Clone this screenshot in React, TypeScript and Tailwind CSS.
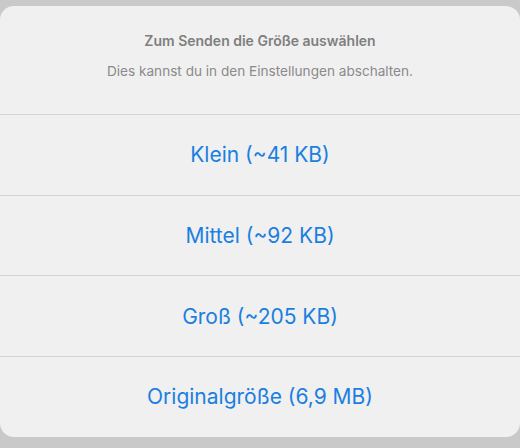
const OPTIONS = ['Klein (~41 KB)', 'Mittel (~92 KB)', 'Groß (~205 KB)', 'Originalgröße (6,9 MB)']

export default function App() {
  return (
    <div
      className="w-[520px] h-[448px] bg-[#c9c9c9] pt-[6px]"
      style={{ fontFamily: 'Inter, "Noto Sans", sans-serif' }}
    >
      <div className="w-full h-[431px] bg-[#f0f0f0] rounded-[14px] flex flex-col overflow-hidden">
        <div className="h-[108px] flex flex-col items-center pt-[27px]">
          <p className="text-[14px] leading-4 font-semibold text-[#7f7f7f]">Zum Senden die Größe auswählen</p>
          <p className="mt-[14px] text-[13.6px] leading-4 text-[#8a8a8a]">
            Dies kannst du in den Einstellungen abschalten.
          </p>
        </div>
        {OPTIONS.map((label) => (
          <div
            key={label}
            className="h-[81px] border-t border-[#d4d4d4] flex items-center justify-center text-[21px] text-[#1a7fe0]"
          >
            {label}
          </div>
        ))}
      </div>
    </div>
  )
}
